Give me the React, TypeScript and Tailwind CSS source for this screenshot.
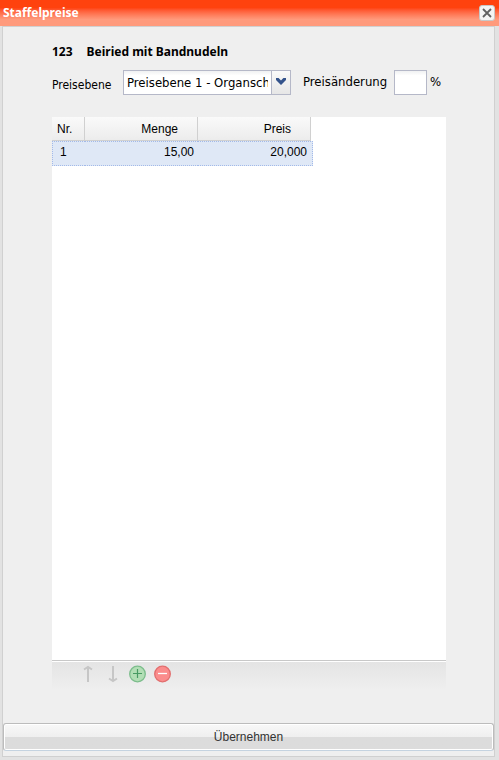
import { useState } from "react";

const levels = ["Preisebene 1 - Organschaft", "Preisebene 2 - Extern"];

const rows = [{ nr: 1, menge: "15,00", preis: "20,000" }];

const headCell = "h-6 bg-linear-to-b from-[#fafafa] to-[#ececec] border-b border-r border-[#d0d0d0] leading-6";
const dotted = "border-y border-dotted border-[#a3bae9] bg-[#dfe8f6]";
const boldFont = "font-['Tahoma','Noto_Sans',sans-serif] font-bold";
const formFont = "font-['Tahoma','DejaVu_Sans_Condensed','Noto_Sans',sans-serif]";

function TitleBar() {
    return (
        <header className="flex h-[26px] items-center justify-between bg-linear-to-b from-[#ff420e] from-30% to-[#ff9a7c] to-75% pl-[3px] pr-1">
            <h1 className={`${boldFont} text-[12px] leading-4 text-white`}>Staffelpreise</h1>
            <button type="button" aria-label="Schließen" className="flex size-4 items-center justify-center rounded-[3px] border border-[#c8c8c8] bg-[#f4f4f4]">
                <svg viewBox="0 0 10 10" className="size-2.5" stroke="#606060" strokeWidth="1.8">
                    <path d="M1 1L9 9M9 1L1 9" />
                </svg>
            </button>
        </header>
    );
}

function PriceForm() {
    const [level, setLevel] = useState(levels[0]);
    const [change, setChange] = useState("");

    return (
        <div className={`flex items-center ${formFont} text-[13px] leading-5 text-black`}>
            <label htmlFor="level" className="w-[71px] shrink-0 pt-1 text-[12px] leading-4">Preisebene</label>
            <div className="relative h-[25px] w-[168px] shrink-0">
                <select
                    id="level"
                    value={level}
                    onChange={(e) => setLevel(e.target.value)}
                    className="h-full w-full appearance-none overflow-hidden border border-[#b5b8c8] bg-white bg-linear-to-b from-[#f0f1f2] to-white to-20% pl-[3px] pr-[22px]"
                >
                    {levels.map((l) => <option key={l}>{l}</option>)}
                </select>
                <span className="pointer-events-none absolute inset-y-0 right-0 flex w-5 items-center justify-center border border-[#b5b8c8] bg-linear-to-b from-[#fafafa] to-[#e6e6e6]">
                    <svg viewBox="0 0 10 7" className="mb-0.5 h-[7px] w-2.5" fill="#34538b">
                        <path d="M0 0h2.6L5 2.6 7.4 0H10v2L5 7 0 2z" />
                    </svg>
                </span>
            </div>
            <label htmlFor="change" className="w-[103px] shrink-0 pb-0.5 pl-3">Preisänderung</label>
            <input
                id="change"
                value={change}
                onChange={(e) => setChange(e.target.value)}
                className="h-[25px] w-[33px] border border-[#b5b8c8] bg-white bg-linear-to-b from-[#f0f1f2] to-white to-20% px-1"
            />
            <span className="pb-0.5 pl-[3px]">%</span>
        </div>
    );
}

function PriceTable() {
    return (
        <table className="w-[261px] table-fixed border-separate border-spacing-0 text-[12px] text-black">
            <thead>
                <tr>
                    <th className="w-[33px] p-0 font-normal"><div className={`${headCell} pl-[5px] text-left`}>Nr.</div></th>
                    <th className="w-[113px] p-0 font-normal"><div className={`${headCell} pr-[19px] text-right`}>Menge</div></th>
                    {/* header stops short of the row's right edge */}
                    <th className="p-0 pr-0.5 font-normal"><div className={`${headCell} pr-[19px] text-right`}>Preis</div></th>
                </tr>
            </thead>
            <tbody>
                {rows.map((r) => (
                    <tr key={r.nr} className="h-[25px] leading-5">
                        <td className={`${dotted} border-l p-0 pl-[7px] align-top`}>{r.nr}</td>
                        <td className={`${dotted} p-0 pr-1 text-right align-top`}>{r.menge}</td>
                        <td className={`${dotted} border-r p-0 pr-[5px] text-right align-top`}>{r.preis}</td>
                    </tr>
                ))}
            </tbody>
        </table>
    );
}

function Toolbar() {
    return (
        <div className="flex h-7 items-start gap-[7px] bg-linear-to-b from-[#e4e4e4] to-[#efefef] pl-[27px] pt-[3px]">
            <button type="button" aria-label="Nach oben" className="size-[18px]">
                <svg viewBox="0 0 18 18" fill="none" stroke="#c6c6c6" strokeWidth="2">
                    <path d="M9 17V2M5 4.5L9 2l4 2.5" />
                </svg>
            </button>
            <button type="button" aria-label="Nach unten" className="size-[18px]">
                <svg viewBox="0 0 18 18" fill="none" stroke="#c6c6c6" strokeWidth="2">
                    <path d="M9 1v15M5 13.5L9 16l4-2.5" />
                </svg>
            </button>
            <button type="button" aria-label="Hinzufügen" className="size-[18px]">
                <svg viewBox="0 0 18 18">
                    <circle cx="8.5" cy="9" r="7.8" fill="#b2deb5" stroke="#7cbd8c" strokeWidth="1.3" />
                    <path d="M4 8.5h9M8.5 4v9" stroke="#489a63" strokeWidth="1.2" />
                </svg>
            </button>
            <button type="button" aria-label="Entfernen" className="size-[18px]">
                <svg viewBox="0 0 18 18">
                    <circle cx="8.5" cy="9" r="7.8" fill="#fb8c8c" stroke="#e26e6e" strokeWidth="1.3" />
                    <path d="M4 8.5h9" stroke="#fff" strokeWidth="1.3" />
                </svg>
            </button>
        </div>
    );
}

export default function App() {
    return (
        <div className="flex min-h-screen flex-col bg-[#e2e2e2] font-['Liberation_Sans',Arial,sans-serif]">
            <TitleBar />
            <main className="mb-[3px] ml-0.5 mr-1 flex flex-1 flex-col border border-[#d0d0d0] bg-[#efefef]">
                <section className="flex flex-1 flex-col pl-[49px] pr-12 pt-[17px]">
                    <h2 className={`flex gap-3.5 ${boldFont} text-[12px] leading-4 text-black`}>
                        <span>123</span>
                        <span>Beiried mit Bandnudeln</span>
                    </h2>
                    <div className="pt-2.5 pb-[22px]">
                        <PriceForm />
                    </div>
                    <div className="flex-1 border-b border-[#c8c8c8] bg-white">
                        <PriceTable />
                    </div>
                    <div className="border-t border-white">
                        <Toolbar />
                    </div>
                </section>
                <div className="pt-[33px] pb-[5px]">
                    <button
                        type="button"
                        className="block h-7 w-full rounded-[3px] border border-[#bcbcbc] border-b-[#c5d3e0] bg-linear-to-b from-[#f8f8f8] via-[#efefef] via-50% to-[#dcdcdc] to-50% text-[12px] text-[#333] inset-ring inset-ring-white"
                    >
                        Übernehmen
                    </button>
                </div>
            </main>
        </div>
    );
}
